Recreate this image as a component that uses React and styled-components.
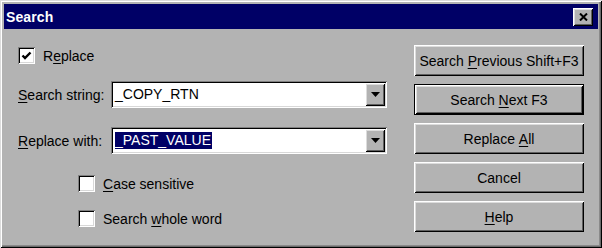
import React from 'react'
import styled, { createGlobalStyle, css } from 'styled-components'

const GlobalStyle = createGlobalStyle`
  html, body {
    margin: 0;
    padding: 0;
    background: #b3b3b3;
  }
  body {
    font-family: "Liberation Sans", Arial, sans-serif;
    font-size: 14px;
    color: #000;
  }
`

const raised = css`
  box-shadow:
    inset 1px 1px #ffffff,
    inset -1px -1px #000000,
    inset 2px 2px #dcdcdc,
    inset -2px -2px #5f5f5f;
`

const sunken = css`
  box-shadow:
    inset 1px 1px #808080,
    inset -1px -1px #ffffff,
    inset 2px 2px #000000,
    inset -2px -2px #d8d8d8;
`

const Window = styled.div`
  box-sizing: border-box;
  width: 602px;
  height: 248px;
  padding: 4px;
  background: #b3b3b3;
  display: flex;
  flex-direction: column;
  box-shadow:
    inset 1px 1px #dcdcdc,
    inset -1px -1px #000000,
    inset 2px 2px #ffffff,
    inset -2px -2px #6a6a6a,
    inset -3px -3px #8a8a8a;
`

const TitleBar = styled.div`
  height: 25px;
  background: #000066;
  display: flex;
  align-items: center;
  justify-content: space-between;
  padding: 0 5px 0 2px;
`

const Title = styled.span`
  color: #fff;
  font-weight: bold;
  font-size: 14px;
  letter-spacing: 0.1px;
`

const CloseButton = styled.div`
  width: 20px;
  height: 18px;
  margin-top: 1px;
  background: #b3b3b3;
  display: flex;
  align-items: center;
  justify-content: center;
  ${raised}
`

const Body = styled.div`
  flex: 1;
  display: flex;
  justify-content: space-between;
  padding: 0 14px 0 14px;
`

const LeftColumn = styled.div`
  display: flex;
  flex-direction: column;
`

const CheckRow = styled.label`
  display: flex;
  align-items: center;
  gap: 8px;
  height: 17px;
  margin-top: ${(p) => p.$top}px;
  margin-left: ${(p) => p.$indent || 0}px;
`

const Box = styled.span`
  box-sizing: border-box;
  width: 17px;
  height: 17px;
  background: #fff;
  display: flex;
  align-items: center;
  justify-content: center;
  ${sunken}
`

const FieldRow = styled.div`
  display: flex;
  align-items: center;
  margin-top: ${(p) => p.$top}px;
`

const Label = styled.span`
  width: 93px;
`

const Field = styled.div`
  box-sizing: border-box;
  width: 276px;
  height: 27px;
  background: #fff;
  padding: 2px 4px 2px 4px;
  display: flex;
  align-items: center;
  justify-content: space-between;
  ${sunken}
`

const Value = styled.span`
  line-height: 17px;
  padding-right: 1px;
  background: ${(p) => (p.$selected ? '#000066' : 'transparent')};
  color: ${(p) => (p.$selected ? '#fff' : '#000')};
`

const DropButton = styled.span`
  box-sizing: border-box;
  width: 20px;
  height: 23px;
  background: #b3b3b3;
  display: flex;
  align-items: center;
  justify-content: center;
  margin-right: -2px;
  ${raised}
`

const RightColumn = styled.div`
  display: flex;
  flex-direction: column;
  gap: 8px;
  padding-top: 16px;
`

const Button = styled.div`
  box-sizing: border-box;
  width: 170px;
  height: 31px;
  display: flex;
  align-items: center;
  justify-content: center;
  background: #b3b3b3;
  ${raised}
  ${(p) =>
    p.$default &&
    css`
      border: 1px solid #000;
    `}
`

const Key = styled.u`
  text-decoration: underline;
  text-underline-offset: 2px;
`

function Check({ checked }) {
  return (
    <Box>
      {checked && (
        <svg width="11" height="10" viewBox="0 0 11 10">
          <path d="M1.5 4.5 L4 7 L9.5 1.5" fill="none" stroke="#000" strokeWidth="2.4" />
        </svg>
      )}
    </Box>
  )
}

function Arrow() {
  return (
    <svg width="9" height="5" viewBox="0 0 9 5">
      <path d="M0 0 H9 L4.5 5 Z" fill="#000" />
    </svg>
  )
}

function Combo({ value, selected }) {
  return (
    <Field>
      <Value $selected={selected}>{value}</Value>
      <DropButton>
        <Arrow />
      </DropButton>
    </Field>
  )
}

export default function App() {
  return (
    <>
      <GlobalStyle />
      <Window>
        <TitleBar>
          <Title>Search</Title>
          <CloseButton>
            <svg width="9" height="8" viewBox="0 0 9 8">
              <path d="M1 0.5 L8 7.5 M8 0.5 L1 7.5" stroke="#000" strokeWidth="2" />
            </svg>
          </CloseButton>
        </TitleBar>
        <Body>
          <LeftColumn>
            <CheckRow $top={18}>
              <Check checked />
              <span>
                R<Key>e</Key>place
              </span>
            </CheckRow>
            <FieldRow $top={17}>
              <Label>
                <Key>S</Key>earch string:
              </Label>
              <Combo value="_COPY_RTN" />
            </FieldRow>
            <FieldRow $top={19}>
              <Label>
                <Key>R</Key>eplace with:
              </Label>
              <Combo value="_PAST_VALUE" selected />
            </FieldRow>
            <CheckRow $top={21} $indent={60}>
              <Check />
              <span>
                <Key>C</Key>ase sensitive
              </span>
            </CheckRow>
            <CheckRow $top={18} $indent={60}>
              <Check />
              <span>
                Search <Key>w</Key>hole word
              </span>
            </CheckRow>
          </LeftColumn>
          <RightColumn>
            <Button>
              Search&nbsp;<Key>P</Key>revious Shift+F3
            </Button>
            <Button $default>
              Search&nbsp;<Key>N</Key>ext F3
            </Button>
            <Button>
              Replace&nbsp;<Key>A</Key>ll
            </Button>
            <Button>Cancel</Button>
            <Button>
              <Key>H</Key>elp
            </Button>
          </RightColumn>
        </Body>
      </Window>
    </>
  )
}
